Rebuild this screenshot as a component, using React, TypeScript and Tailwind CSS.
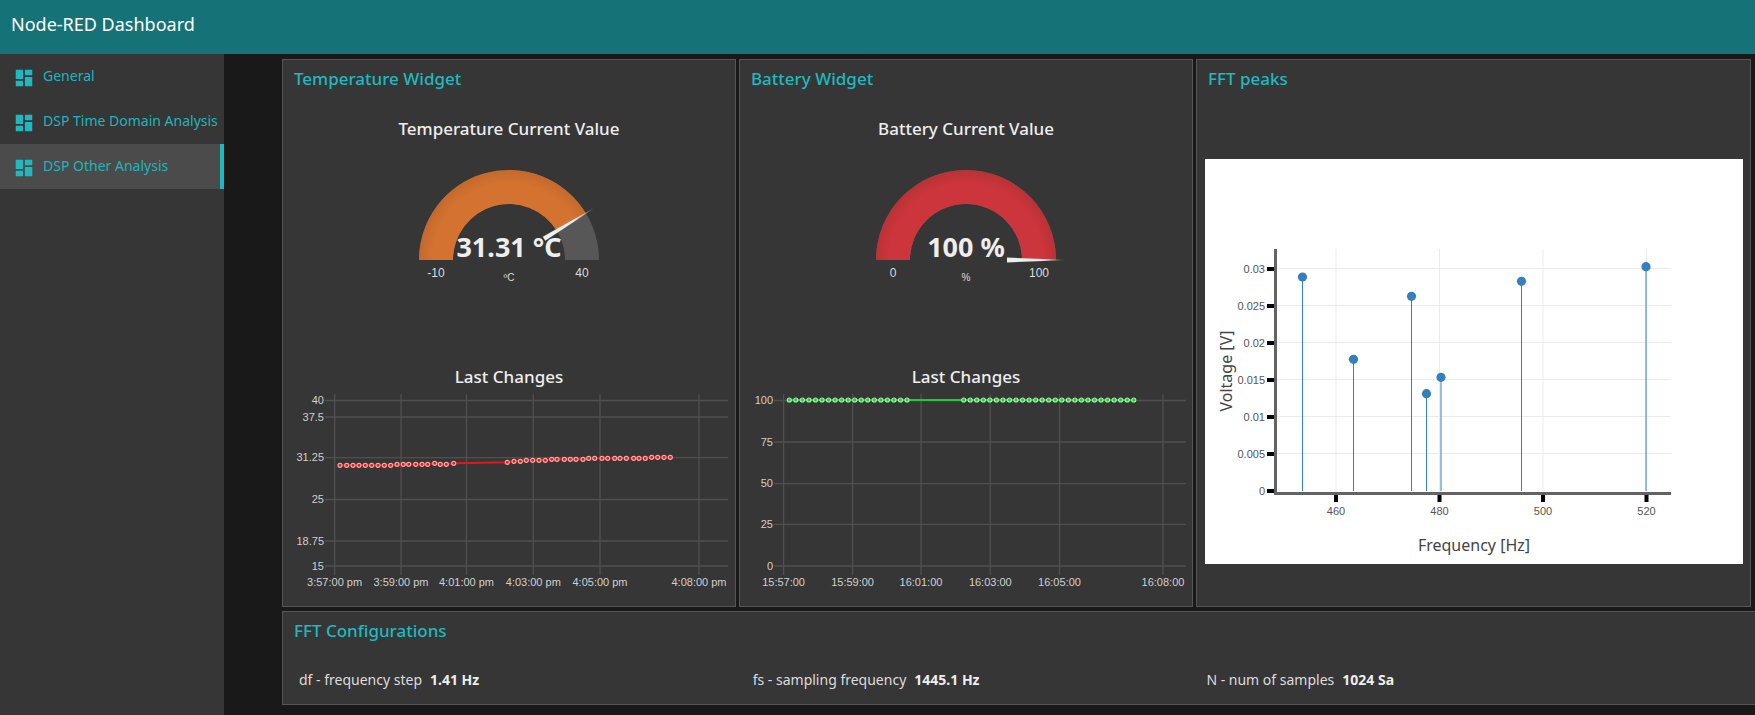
import type { ReactNode } from 'react';

type Point = [number, number];

const pages = [
  { name: 'General', active: false },
  { name: 'DSP Time Domain Analysis', active: false },
  { name: 'DSP Other Analysis', active: true },
];

const settings = [
  { label: 'df - frequency step', value: '1.41 Hz' },
  { label: 'fs - sampling frequency', value: '1445.1 Hz' },
  { label: 'N - num of samples', value: '1024 Sa' },
];

// Chart positions are in the units of each drawing's viewBox.
const steps: [number, number[]][] = [
  [75.3, [57, 63.7, 70, 76, 82.3, 88.7, 95, 101.3, 107.7]],
  [74.3, [114, 120.3, 125.7, 132.7, 139, 144.7]],
  [73.3, [151.7]],
  [74.3, [157.3, 163.3]],
  [73.3, [170.7]],
  [72.3, [224.3]],
  [71.3, [231, 237.3]],
  [70.3, [243.3, 249.7, 256, 262.3]],
  [69.3, [268.7, 274, 281.3, 287.3, 293, 300]],
  [68.3, [305.7, 311.7, 319, 324.7, 331.7, 337, 343.3, 350.7, 356, 362.3]],
  [67.3, [368.7, 374.7, 381, 387.3]],
];
const temperaturePoints: Point[] = steps.flatMap(([y, xs]) => xs.map((x): Point => [x, y]));

const batteryPoints: Point[] = [
  ...Array.from({ length: 19 }, (_, i): Point => [49.3 + i * 6.54, 10]),
  ...Array.from({ length: 27 }, (_, i): Point => [223.7 + i * 6.54, 10]),
];

const peaks: Point[] = [
  [97.5, 118],
  [148.5, 200.3],
  [206.5, 137.3],
  [221.5, 234.7],
  [236, 218.3],
  [316.5, 122.3],
  [441, 107.7],
];

function DashboardIcon() {
  return (
    <svg viewBox="0 0 24 24" className="mt-[3px] h-[22px] w-[22px] shrink-0 fill-[#20b8be]" aria-hidden="true">
      <path d="M3 13h8V3H3v10zm0 8h8v-6H3v6zm10 0h8V11h-8v10zm0-18v6h8V3h-8z" />
    </svg>
  );
}

function Card({ title, className = '', children }: { title: string; className?: string; children: ReactNode }) {
  return (
    <section className={`flex flex-col border border-[#555] bg-[#363636] ${className}`}>
      <h2 className="px-[11px] pt-[7px] text-[17px] leading-6 font-medium text-[#1fb9bf]">{title}</h2>
      {children}
    </section>
  );
}

function Gauge(props: {
  id: string;
  title: string;
  value: string;
  unit: string;
  min: string;
  max: string;
  share: number;
  inner: string;
  outer: string;
}) {
  const { id, title, value, unit, min, max, share, inner, outer } = props;
  const angle = Math.PI * (1 - share);
  const at = (r: number) => `${226 + r * Math.cos(angle)} ${121 - r * Math.sin(angle)}`;
  return (
    <div>
      <h3 className="pt-[26px] text-center text-[17px] leading-6 font-medium text-[#eee]">{title}</h3>
      <svg viewBox="0 2 452 148" className="w-full" role="img" aria-label={`${title}: ${value}`}>
        <defs>
          <radialGradient id={`${id}-arc`} gradientUnits="userSpaceOnUse" cx="226" cy="121" r="90">
            <stop offset="0.62" stopColor={inner} />
            <stop offset="0.86" stopColor={inner} />
            <stop offset="1" stopColor={outer} />
          </radialGradient>
          <linearGradient id={`${id}-needle`} gradientUnits="userSpaceOnUse" x1="41" y1="0" x2="98" y2="0">
            <stop offset="0.6" stopColor="#eee" />
            <stop offset="1" stopColor="#eee" stopOpacity="0.1" />
          </linearGradient>
        </defs>
        <path d="M136 121A90 90 0 0 1 316 121H282A56 56 0 0 0 170 121Z" fill="#575757" />
        <path d={`M136 121A90 90 0 0 1 ${at(90)}L${at(56)}A56 56 0 0 0 170 121Z`} fill={`url(#${id}-arc)`} />
        <polygon
          points="41,-2.4 98,-0.3 98,0.3 41,2.4"
          fill={`url(#${id}-needle)`}
          transform={`translate(226 121) rotate(${(-angle * 180) / Math.PI})`}
        />
        <text x="226" y="118" textAnchor="middle" className="fill-[#eee] text-[27px] font-bold">
          {value}
        </text>
        <g className="fill-[#ddd] font-['Liberation_Sans',sans-serif]" textAnchor="middle">
          <text x="153" y="138" className="text-[12px]">{min}</text>
          <text x="299" y="138" className="text-[12px]">{max}</text>
          <text x="226" y="142" className="text-[10px]">{unit}</text>
        </g>
      </svg>
    </div>
  );
}

function History(props: {
  left: number;
  right: number;
  rows: [number, string][];
  columns: [number, string][];
  points: Point[];
  line: string;
  rim: string;
}) {
  const { left, right, rows, columns, points, line, rim } = props;
  return (
    <div className="pb-[10px]">
      <h3 className="mb-px pt-[76px] text-center text-[17px] leading-6 font-medium text-[#eee]">Last Changes</h3>
      <svg viewBox="0 0 452 206" className="w-full" role="img" aria-label="Last changes">
        <g stroke="#505050" strokeWidth="1.3">
          {rows.map(([y]) => (
            <line key={y} x1={left} x2={right} y1={y} y2={y} />
          ))}
          {columns.map(([x]) => (
            <line key={x} x1={x} x2={x} y1="4" y2="185" />
          ))}
        </g>
        <g className="fill-[#d0d0d0] font-['Liberation_Sans',sans-serif] text-[11px]">
          {rows.map(([y, text]) => (
            <text key={text} x={left - 1} y={y + 3.5} textAnchor="end">{text}</text>
          ))}
          {columns.map(([x, text]) => (
            <text key={text} x={x} y="196" textAnchor="middle">{text}</text>
          ))}
        </g>
        <polyline points={points.map((p) => p.join(',')).join(' ')} fill="none" stroke={line} strokeWidth="2" />
        {points.map(([x, y]) => (
          <circle key={x} cx={x} cy={y} r="2" fill={line} stroke={rim} strokeWidth="1.2" />
        ))}
      </svg>
    </div>
  );
}

function PeaksPlot() {
  const rows: [number, string][] = [
    [110, '0.03'],
    [147, '0.025'],
    [184, '0.02'],
    [221, '0.015'],
    [258, '0.01'],
    [295, '0.005'],
    [332, '0'],
  ];
  const columns: [number, string][] = [
    [131, '460'],
    [234.5, '480'],
    [338, '500'],
    [441.5, '520'],
  ];
  return (
    <svg viewBox="0 0 538 405" className="w-full bg-white" role="img" aria-label="FFT peaks">
      <g stroke="#ebebeb">
        {rows.slice(0, 6).map(([y]) => (
          <line key={y} x1="72" x2="466" y1={y - 0.5} y2={y - 0.5} />
        ))}
        {columns.map(([x]) => (
          <line key={x} x1={x} x2={x} y1="90" y2="333" />
        ))}
      </g>
      <g stroke="#347fbc">
        {peaks.map(([x, y]) => (
          <line key={x} x1={x} x2={x} y1={y} y2="332" />
        ))}
      </g>
      {peaks.map(([x, y]) => (
        <circle key={x} cx={x} cy={y} r="4.6" fill="#347fbc" />
      ))}
      <path d="M70.5 90V334.5H466" fill="none" stroke="#636363" strokeWidth="3" />
      <g stroke="#000" strokeWidth="4">
        {rows.map(([y]) => (
          <line key={y} x1="62" x2="69" y1={y} y2={y} />
        ))}
        {columns.map(([x]) => (
          <line key={x} x1={x} x2={x} y1="336" y2="343" />
        ))}
      </g>
      <g className="fill-[#555] font-['Liberation_Sans',sans-serif] text-[11px]">
        {rows.map(([y, text]) => (
          <text key={text} x="60" y={y + 4} textAnchor="end">{text}</text>
        ))}
        {columns.map(([x, text]) => (
          <text key={text} x={x} y="356" textAnchor="middle">{text}</text>
        ))}
      </g>
      <g className="fill-[#444] text-[16px]" textAnchor="middle">
        <text x="269" y="392">Frequency [Hz]</text>
        <text transform="translate(27 212) rotate(-90)">Voltage [V]</text>
      </g>
    </svg>
  );
}

export default function App() {
  return (
    <div className="flex min-h-screen flex-col overflow-x-hidden bg-[#191919] font-['Noto_Sans',sans-serif]">
      <header className="flex h-[54px] items-center bg-[#157277] px-[11px] pb-[6px]">
        <h1 className="text-[18px] leading-6 text-white">Node-RED Dashboard</h1>
      </header>
      <div className="flex flex-1">
        <nav className="w-[224px] shrink-0 bg-[#363636]">
          {pages.map((page) => (
            <a
              key={page.name}
              href="#"
              aria-current={page.active ? 'page' : undefined}
              className={`flex h-[45px] items-center gap-2 border-r-4 pl-[13px] text-[14px] whitespace-nowrap text-[#20b5bb] ${
                page.active ? 'border-[#20b8be] bg-[#4b4b4b]' : 'border-transparent'
              }`}
            >
              <DashboardIcon />
              <span className="pb-[2px]">{page.name}</span>
            </a>
          ))}
        </nav>
        <main className="flex min-w-0 flex-1 flex-col gap-1 pt-[5px] pb-[10px] pl-[58px]">
          <div className="grid grid-cols-[454fr_454fr_555fr] gap-[3px] pr-1">
            <Card title="Temperature Widget">
              <Gauge
                id="temperature"
                title="Temperature Current Value"
                value="31.31 °C"
                unit="ºC"
                min="-10"
                max="40"
                share={0.826}
                inner="#d4722f"
                outer="#c3692d"
              />
              <History
                left={42}
                right={445}
                rows={[
                  [10.5, '40'],
                  [27, '37.5'],
                  [67.7, '31.25'],
                  [109.5, '25'],
                  [151, '18.75'],
                  [176, '15'],
                ]}
                columns={[
                  [51.6, '3:57:00 pm'],
                  [118, '3:59:00 pm'],
                  [183.5, '4:01:00 pm'],
                  [250.3, '4:03:00 pm'],
                  [317, '4:05:00 pm'],
                  [416, '4:08:00 pm'],
                ]}
                points={temperaturePoints}
                line="#e3171b"
                rim="#f5a9a6"
              />
            </Card>
            <Card title="Battery Widget">
              <Gauge
                id="battery"
                title="Battery Current Value"
                value="100 %"
                unit="%"
                min="0"
                max="100"
                share={1}
                inner="#cb353b"
                outer="#b93236"
              />
              <History
                left={34}
                right={446}
                rows={[
                  [10.5, '100'],
                  [52, '75'],
                  [93.7, '50'],
                  [134.3, '25'],
                  [176, '0'],
                ]}
                columns={[
                  [43.6, '15:57:00'],
                  [112.6, '15:59:00'],
                  [181, '16:01:00'],
                  [250.3, '16:03:00'],
                  [319.5, '16:05:00'],
                  [423, '16:08:00'],
                ]}
                points={batteryPoints}
                line="#1fc93a"
                rim="#a9eeac"
              />
            </Card>
            <Card title="FFT peaks">
              <div className="flex-1 pt-[68px] pr-[7px] pl-2">
                <PeaksPlot />
              </div>
            </Card>
          </div>
          <Card title="FFT Configurations" className="border-r-0 pb-[12px]">
            <dl className="grid grid-cols-[454fr_454fr_549fr] pt-[25px] pl-4 text-[14px] leading-6">
              {settings.map((item) => (
                <div key={item.label} className="flex gap-2">
                  <dt className="text-[#ddd]">{item.label}</dt>
                  <dd className="font-bold text-[#eee]">{item.value}</dd>
                </div>
              ))}
            </dl>
          </Card>
        </main>
      </div>
    </div>
  );
}
